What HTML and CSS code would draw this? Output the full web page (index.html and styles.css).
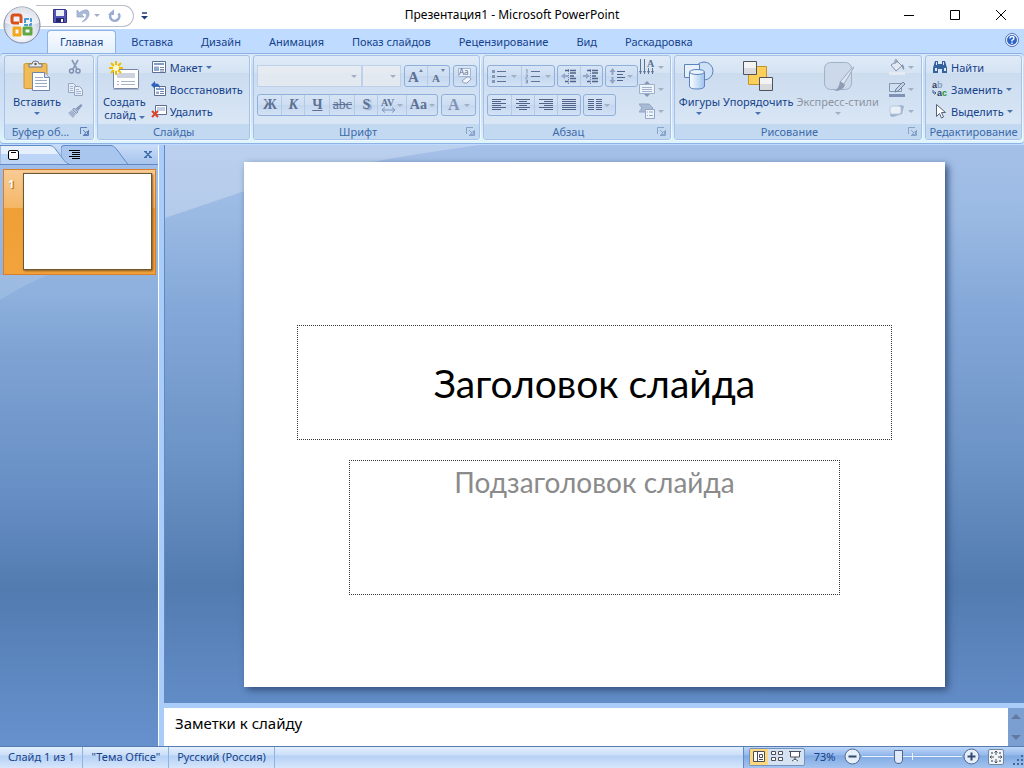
FILE: index.html
```html
<!DOCTYPE html>
<html lang="ru">
<head>
<meta charset="utf-8">
<meta name="viewport" content="width=device-width, initial-scale=1">
<title>Презентация1 - Microsoft PowerPoint</title>
<link rel="stylesheet" href="styles.css">
</head>
<body>

<header class="titlebar">
  <div class="quick">
    <button class="office" aria-label="Office">
      <svg width="40" height="40" viewBox="0 0 40 40">
        <defs>
          <radialGradient id="orb" cx="50%" cy="75%" r="75%">
            <stop offset="0" stop-color="#fff"/><stop offset=".55" stop-color="#dde3ee"/><stop offset="1" stop-color="#a9b3c6"/>
          </radialGradient>
        </defs>
        <circle cx="20" cy="20" r="18" fill="url(#orb)" stroke="#7d8aa3"/>
        <path d="M3 18a17 16 0 0 1 34 0q-17 5-34 0z" fill="#fff" opacity=".6"/>
        <g fill="none" stroke-linejoin="round">
          <path d="M17 18h-5q-2 0-2-2v-4q0-2 2-2h5q2 0 2 2v6" stroke="#d8501c" stroke-width="3"/>
          <path d="M23 14h6v6h-6z" stroke="#4a9ad4" stroke-width="2" stroke-dasharray="4 1"/>
          <path d="M12 23h6v7h-6z" stroke="#f2a81c" stroke-width="3"/>
          <path d="M22 23h7v6h-7z" stroke="#62a744" stroke-width="3"/>
        </g>
      </svg>
    </button>
    <div class="quick-bar">
      <button aria-label="Сохранить">
        <svg width="16" height="16" viewBox="0 0 16 16">
          <path d="M1.500 1.500h12l1 1v12h-13z" fill="#5456b8" stroke="#33348c"/>
          <path d="M4 2h8v6H4z" fill="#eef0fa"/><path d="M4 10h8v4H4z" fill="#23246a"/><path d="M9 11h2v3H9z" fill="#fff"/>
        </svg>
      </button>
      <button class="undo" aria-label="Отменить">
        <svg width="14" height="14" viewBox="0 0 14 14"><path d="M1 1v7h7L5.500 5.500Q10 2.500 10.500 6T6 13q7-3 7-8T9 1 3.500 3.500z" fill="#a9b9d6" stroke="#8fa2c6" stroke-width=".7"/></svg>
        <i class="arrow off"></i>
      </button>
      <button aria-label="Повторить">
        <svg width="14" height="14" viewBox="0 0 14 14"><path d="M10.500 4.500A4.600 4.600 0 1 1 4 3.500" fill="none" stroke="#9aadcf" stroke-width="2.600"/><path d="M6 0v6H0z" fill="#9aadcf"/></svg>
      </button>
    </div>
    <button class="quick-more" aria-label="Настройка панели быстрого доступа">
      <svg width="7" height="8" viewBox="0 0 7 8"><path d="M1 1h5" stroke="#1e3c78" stroke-width="1.500"/><path d="M0 4h7L3.500 7.500z" fill="#1e3c78"/></svg>
    </button>
  </div>
  <h1>Презентация1 - Microsoft PowerPoint</h1>
  <div class="window-buttons">
    <button aria-label="Свернуть"><svg width="10" height="10"><path d="M0 5.500h10" stroke="#000"/></svg></button>
    <button aria-label="Развернуть"><svg width="10" height="10"><path d="M.5.500h9v9h-9z" fill="none" stroke="#000"/></svg></button>
    <button aria-label="Закрыть"><svg width="10" height="10"><path d="M0 0l10 10M10 0L0 10" stroke="#000"/></svg></button>
  </div>
</header>

<nav class="tabs">
  <button class="active">Главная</button>
  <button>Вставка</button>
  <button>Дизайн</button>
  <button>Анимация</button>
  <button>Показ слайдов</button>
  <button>Рецензирование</button>
  <button>Вид</button>
  <button>Раскадровка</button>
  <button class="help" aria-label="Справка">
    <svg width="14" height="14" viewBox="0 0 14 14">
      <circle cx="7" cy="7" r="6.500" fill="#fff" stroke="#4a6eb0"/><circle cx="7" cy="7" r="5" fill="#2c63c8"/>
      <path d="M5 5.500q0-2 2-2t2 1.700Q9 6.300 7 7.300V8.500M7 9.500V11" fill="none" stroke="#fff" stroke-width="1.400"/>
    </svg>
  </button>
</nav>

<section class="ribbon">
  <div class="group clipboard">
    <div class="group-body">
      <button class="big">
        <svg width="30" height="32" viewBox="0 0 30 32">
          <rect x="2" y="3.500" width="23" height="25" rx="1.500" fill="#f0bc5a" stroke="#cf9534"/>
          <path d="M7 7V4h3q0-3 3.500-3T17 4h3v3z" fill="#e8eaee" stroke="#6d7482"/><circle cx="13.500" cy="4" r="1.200" fill="#555"/>
          <path d="M10.500 12.500h12l5 5v13h-17z" fill="#fff" stroke="#7286ab"/><path d="M22.500 12.500v5h5" fill="#d6e0f0" stroke="#7286ab"/>
          <path d="M13 17.500h8M13 20.500h12M13 23.500h12M13 26.500h12" stroke="#9aa9c4"/>
        </svg>
        <span>Вставить</span>
        <i class="arrow"></i>
      </button>
      <div class="stack">
        <button class="mini" aria-label="Вырезать"><svg width="16" height="16" viewBox="0 0 16 16"><path d="M5 1l5 9M11 1L6 10" stroke="#8b9bb8" stroke-width="1.700"/><circle cx="4.500" cy="12" r="2" fill="none" stroke="#7e8fb0" stroke-width="1.500"/><circle cx="11" cy="12" r="2" fill="none" stroke="#7e8fb0" stroke-width="1.500"/></svg></button>
        <button class="mini" aria-label="Копировать"><svg width="16" height="16" viewBox="0 0 16 16"><path d="M1.500 2.500h5l3 3v6h-8z" fill="#e6edf7" stroke="#93a6c6"/><path d="M3 5.500h3M3 7.500h3M3 9.500h3" stroke="#a9b8d2"/><path d="M7.500 5.500h5l3 3v6h-8z" fill="#e6edf7" stroke="#93a6c6"/><path d="M9 8.500h3M9 10.500h5M9 12.500h5" stroke="#a9b8d2"/></svg></button>
        <button class="mini" aria-label="Формат по образцу"><svg width="16" height="16" viewBox="0 0 16 16"><path d="M14 1l1.500 1.500L11 8 8.500 5.500z" fill="#8799ba"/><path d="M7 5l4 4-1.500 1.500-4-4z" fill="#b8c5dc" stroke="#8799ba"/><path d="M5 7l4 4-3 4L1 10z" fill="#a4b3ce"/></svg></button>
      </div>
    </div>
    <div class="group-title"><span>Буфер об...</span><button class="launcher" aria-label="Буфер обмена"><svg width="9" height="9" viewBox="0 0 9 9"><path d="M.5 7V.5H7M3 3l3 3M8.500 3v5.500H3M7.500 4v3.500H4z" fill="none" stroke="#5f7fb5"/></svg></button></div>
  </div>

  <div class="group slides">
    <div class="group-body">
      <button class="big">
        <svg width="32" height="32" viewBox="0 0 32 32">
          <rect x="5.500" y="9.500" width="25" height="19" rx="1" fill="#fff" stroke="#7688a8"/><path d="M5 29.500h26" stroke="#a9b6cc"/>
          <path d="M9 13h18v5H9z" fill="#cdd3de"/><path d="M9 21.500h2m2 0h14M9 24.500h2m2 0h14" stroke="#a7b3c8"/>
          <path d="M8 1v14M1 8h14M3 3l10 10M13 3L3 13" stroke="#f0bd00" stroke-width="2"/><circle cx="8" cy="8" r="3" fill="#fffbd0"/>
        </svg>
        <span>Создать<br>слайд <i class="arrow"></i></span>
      </button>
      <div class="stack">
        <button class="mini"><svg width="16" height="16" viewBox="0 0 16 16"><path d="M1.500 2.500h13v11h-13z" fill="#fff" stroke="#5b6f93"/><path d="M3 4h10v2H3z" fill="#7e9ccc"/><path d="M3 7.500h5v4.500H3z" fill="#8fa9d3"/><path d="M9 8.500h4M9 10.500h4M9 12h4" stroke="#7688a8"/></svg><span>Макет</span><i class="arrow"></i></button>
        <button class="mini"><svg width="16" height="16" viewBox="0 0 16 16"><path d="M3.500 5.500h11v9h-11z" fill="#fff" stroke="#5b6f93"/><path d="M5 7h8v2H5z" fill="#7e9ccc"/><path d="M5 10.500h3v2.500H5z" fill="#8fa9d3"/><path d="M9 10.500h4M9 12.500h4" stroke="#7688a8"/><path d="M0 4l4-4v2.500q5-.5 5 4.500Q7 4.500 4 5.500V8z" fill="#2f62bd"/></svg><span>Восстановить</span></button>
        <button class="mini"><svg width="16" height="16" viewBox="0 0 16 16"><path d="M4.500 2.500h11v9h-11z" fill="#fff" stroke="#5b6f93"/><path d="M6 4h8v4H6z" fill="#c3cfe2"/><path d="M1 8l6 6M7 8l-6 6" stroke="#e0402a" stroke-width="2"/></svg><span>Удалить</span></button>
      </div>
    </div>
    <div class="group-title"><span>Слайды</span></div>
  </div>

  <div class="group font">
    <div class="group-body rows">
      <div class="row">
        <div class="combos">
          <span class="combo family"><select aria-label="Шрифт" disabled><option></option></select><i class="arrow off"></i></span>
          <span class="combo size"><select aria-label="Размер шрифта" disabled><option></option></select><i class="arrow off"></i></span>
        </div>
        <div class="set">
          <button disabled aria-label="Увеличить размер"><svg width="16" height="16"><text x="0" y="14" class="glyph g15">A</text><path d="M11 4l2-3 2 3z" fill="#6c84ac"/></svg></button>
          <button disabled aria-label="Уменьшить размер"><svg width="16" height="16"><text x="1" y="14" class="glyph g11">A</text><path d="M10 1h4l-2 3z" fill="#6c84ac"/></svg></button>
        </div>
        <div class="set"><button disabled aria-label="Очистить формат"><svg width="18" height="18"><path d="M2.500 1.500h12v8h-12z" fill="#edf3fb" stroke="#a3b5d1"/><text x="3" y="8" class="tiny">Aa</text><path d="M6 14l5-4q3-1 4 2l-4 4q-4 1-5-2z" fill="#f2f5fa" stroke="#8d9ebc"/></svg></button></div>
      </div>
      <div class="row">
        <div class="set">
          <button disabled class="serif w23"><b>Ж</b></button>
          <button disabled class="serif w23"><b><em>К</em></b></button>
          <button disabled class="serif w25"><b><u>Ч</u></b></button>
          <button disabled class="serif w25"><s>abc</s></button>
          <button disabled class="serif w23 shadow"><b>S</b></button>
          <button disabled class="serif w29" aria-label="Интервал"><svg width="16" height="16"><text x="0" y="9" class="glyph g10">AV</text><path d="M1 13h13M4 10.500L1 13l3 2.500M11 10.500L14 13l-3 2.500" fill="none" stroke="#7c96c0"/></svg><i class="arrow off"></i></button>
          <button disabled class="serif w31"><b>Aa</b><i class="arrow off"></i></button>
        </div>
        <div class="set"><button disabled class="serif w33 color"><b>A</b><i class="arrow off"></i></button></div>
      </div>
    </div>
    <div class="group-title"><span>Шрифт</span><button class="launcher dim" aria-label="Шрифт"><svg width="9" height="9" viewBox="0 0 9 9"><path d="M.5 7V.5H7M3 3l3 3M8.500 3v5.500H3M7.500 4v3.500H4z" fill="none" stroke="#5f7fb5"/></svg></button></div>
  </div>

  <div class="group paragraph">
    <div class="group-body">
      <div class="rows">
        <div class="row">
          <div class="set">
            <button disabled class="w33" aria-label="Маркеры"><svg width="16" height="16"><path d="M1 3.500h3M1 8.500h3M1 13.500h3" stroke="#8496b5" stroke-width="3"/><path d="M6 3.500h9M6 8.500h9M6 13.500h9" stroke="#5f7396"/></svg><i class="arrow off"></i></button>
            <button disabled class="w33" aria-label="Нумерация"><svg width="16" height="16"><path d="M1 2l1-.5v4M.5 7h2v1.500l-2 1.500h2M.5 12h2v3h-2M1 13.500h1" fill="none" stroke="#8496b5"/><path d="M6 3.500h9M6 8.500h9M6 13.500h9" stroke="#5f7396"/></svg><i class="arrow off"></i></button>
          </div>
          <div class="set">
            <button disabled aria-label="Уменьшить отступ"><svg width="16" height="16"><path d="M4 2.500h4m1 0h6M9 5h6M9 8h4M9 10.500h6M4 13.500h4m1 0h6" stroke="#4f6488" stroke-width="1.500"/><path d="M7.500 1v15" stroke="#6c84ac" stroke-dasharray="1 1"/><path d="M0 8l4-3v2h3v2H4v2z" fill="#93a7c8"/></svg></button>
            <button disabled aria-label="Увеличить отступ"><svg width="16" height="16"><path d="M4 2.500h4m1 0h6M9 5h6M9 8h4M9 10.500h6M4 13.500h4m1 0h6" stroke="#4f6488" stroke-width="1.500"/><path d="M7.500 1v15" stroke="#6c84ac" stroke-dasharray="1 1"/><path d="M7 8L3 5v2H0v2h3v2z" fill="#93a7c8"/></svg></button>
          </div>
          <div class="set"><button disabled class="w31" aria-label="Междустрочный интервал"><svg width="16" height="16"><path d="M3.500 0l3 4h-2v3h-2V4h-2zM3.500 16l3-4h-2V9h-2v3h-2z" fill="#8fa3c4"/><path d="M8 3.500h8M8 6.500h6M8 9.500h8M8 12.500h6" stroke="#4f6488"/></svg><i class="arrow off"></i></button></div>
        </div>
        <div class="row">
          <div class="set">
            <button disabled class="w23" aria-label="По левому краю"><svg width="14" height="12"><path d="M0 .5h14M0 2.500h9M0 4.500h14M0 6.500h9M0 8.500h14M0 10.500h9" stroke="#4f6488"/></svg></button>
            <button disabled class="w23" aria-label="По центру"><svg width="14" height="12"><path d="M0 .5h14M3 2.500h8M0 4.500h14M3 6.500h8M0 8.500h14M3 10.500h8" stroke="#4f6488"/></svg></button>
            <button disabled class="w23" aria-label="По правому краю"><svg width="14" height="12"><path d="M0 .5h14M5 2.500h9M0 4.500h14M5 6.500h9M0 8.500h14M5 10.500h9" stroke="#4f6488"/></svg></button>
            <button disabled class="w23" aria-label="По ширине"><svg width="14" height="12"><path d="M0 .5h14M0 2.500h14M0 4.500h14M0 6.500h14M0 8.500h14M0 10.500h14" stroke="#4f6488"/></svg></button>
          </div>
          <div class="set"><button disabled class="w31" aria-label="Колонки"><svg width="14" height="12"><path d="M0 .5h6m2 0h6M0 2.500h6m2 0h6M0 4.500h6m2 0h6M0 6.500h6m2 0h6M0 8.500h6m2 0h6M0 10.500h6m2 0h6" stroke="#4f6488"/></svg><i class="arrow off"></i></button></div>
        </div>
      </div>
      <div class="stack">
        <button disabled class="mini" aria-label="Направление текста"><svg width="16" height="16"><path d="M1.500 0v15M5.500 0v15M9.500 9v6M13.500 9v6" stroke="#5f7396"/><path d="M0 12l1.500 3L3 12zM4 12l1.500 3L7 12zM8 12l1.500 3 1.500-3zM12 12l1.500 3 1.500-3z" fill="#5f7396"/><text x="8" y="8" class="glyph g10">A</text></svg><i class="arrow off"></i></button>
        <button disabled class="mini" aria-label="Выровнять текст"><svg width="16" height="16"><path d="M.5 3.500h15v9H.5z" fill="#edf3fa" stroke="#9fb0ca"/><path d="M3 6.500h10M3 8.500h10M3 10.500h10" stroke="#a2b2cb"/><path d="M8 0l3 3H5zM8 16l3-3H5z" fill="#8496b5"/></svg><i class="arrow off"></i></button>
        <button disabled class="mini" aria-label="Преобразовать в SmartArt"><svg width="16" height="16"><path d="M0 1h10l4 4-4 4H0l3-4z" fill="#a9bad4" stroke="#93a6c6"/><path d="M6.500 6.500h9v9h-9z" fill="#edf3fa" stroke="#93a6c6"/><path d="M8 9h1m1 0h4M8 12.500h1m1 0h4" stroke="#93a6c6"/></svg><i class="arrow off"></i></button>
      </div>
    </div>
    <div class="group-title"><span>Абзац</span><button class="launcher dim" aria-label="Абзац"><svg width="9" height="9" viewBox="0 0 9 9"><path d="M.5 7V.5H7M3 3l3 3M8.500 3v5.500H3M7.500 4v3.500H4z" fill="none" stroke="#5f7fb5"/></svg></button></div>
  </div>

  <div class="group drawing">
    <div class="group-body">
      <button class="big">
        <svg width="32" height="32" viewBox="0 0 32 32">
          <defs><linearGradient id="cyl"><stop offset="0" stop-color="#fff"/><stop offset="1" stop-color="#9cc3ee"/></linearGradient></defs>
          <circle cx="21" cy="11" r="9" fill="#cde0f6" stroke="#5b83bd"/><path d="M1.500 4.500h15v13h-15z" fill="#e8f1fb" stroke="#5b83bd"/>
          <path d="M6.500 12v14q0 3 7.500 3t7.500-3V12" fill="url(#cyl)" stroke="#5b83bd"/><ellipse cx="14" cy="12" rx="7.500" ry="2.500" fill="#e8f2fd" stroke="#5b83bd"/>
        </svg>
        <span>Фигуры</span>
        <i class="arrow"></i>
      </button>
      <button class="big">
        <svg width="32" height="32" viewBox="0 0 32 32">
          <path d="M6.500 6.500h18v18h-18z" fill="#fbd05a" stroke="#c7952c"/>
          <path d="M1.500 1.500h13v13h-13z" fill="#d9dadd" stroke="#50535a"/><path d="M2 2h12v6H2z" fill="#f3f3f4"/>
          <path d="M17.500 17.500h13v13h-13z" fill="#d9dadd" stroke="#50535a"/><path d="M18 18h12v6H18z" fill="#f3f3f4"/>
        </svg>
        <span>Упорядочить</span>
        <i class="arrow"></i>
      </button>
      <button class="big" disabled>
        <svg width="32" height="32" viewBox="0 0 32 32">
          <rect x="2.500" y="2.500" width="27" height="27" rx="6" fill="#cbd9eb" stroke="#a3b1c6"/>
          <path d="M32 7l-10 17-4-2L29 9z" fill="#dde5f0" stroke="#9dabc0"/><path d="M18 21l5 4q-2 6-11 6 5-2 6-10z" fill="#8f9db4"/>
        </svg>
        <span>Экспресс-стили</span>
        <i class="arrow"></i>
      </button>
      <div class="stack">
        <button disabled class="mini" aria-label="Заливка фигуры"><svg width="16" height="16"><path d="M2 6l6-4 5 5-6 5z" fill="#e3eaf4" stroke="#8594ae"/><path d="M6 5V1q1-1 2 0v3" fill="none" stroke="#8594ae"/><path d="M13 5q3 2 2 6-2-1-2-4z" fill="#8594ae"/><path d="M0 13h16v3H0z" fill="#e6ebf2"/></svg><i class="arrow off"></i></button>
        <button disabled class="mini" aria-label="Контур фигуры"><svg width="16" height="16"><path d="M.5 2.500h12v8H.5z" fill="none" stroke="#8594ae"/><path d="M14 1l2 2-7 7-3 1 1-3z" fill="#c7d3e5" stroke="#6f819f"/><path d="M0 13h16v3H0z" fill="#7f92b5"/></svg><i class="arrow off"></i></button>
        <button disabled class="mini" aria-label="Эффекты для фигур"><svg width="16" height="16"><path d="M3 4l9-2 3 1-2 8-9 3-3-1z" fill="#9fb1cd"/><rect x="1" y="3" width="11" height="8" rx="2" fill="#e9eff7" stroke="#bac8dc"/></svg><i class="arrow off"></i></button>
      </div>
    </div>
    <div class="group-title"><span>Рисование</span><button class="launcher dim" aria-label="Рисование"><svg width="9" height="9" viewBox="0 0 9 9"><path d="M.5 7V.5H7M3 3l3 3M8.500 3v5.500H3M7.500 4v3.500H4z" fill="none" stroke="#5f7fb5"/></svg></button></div>
  </div>

  <div class="group editing">
    <div class="group-body">
      <div class="stack">
        <button class="mini"><svg width="16" height="16"><path d="M3 2h3v3h4V2h3l2 7v5h-5v-4H6v4H1V9z" fill="#35619f"/><path d="M3 9h2v3H3zM12 9h2v3h-2zM4 3h1v3H4zM11 3h1v3h-1z" fill="#dce8f8"/></svg><span>Найти</span></button>
        <button class="mini"><svg width="16" height="16"><text x="0" y="7" class="ab">a<tspan fill="#8d9db8">b</tspan></text><text x="5" y="15" class="ab">a<tspan fill="#1c9a2c">c</tspan></text><path d="M1 9v3h3M2.500 10.500l1.500 1.500-1.500 1.500" fill="none" stroke="#35619f"/></svg><span>Заменить</span><i class="arrow"></i></button>
        <button class="mini"><svg width="16" height="16"><path d="M4.500 1.500v12l3-3 2 4.500 2-1-2-4.500h4z" fill="#fff" stroke="#55627a"/></svg><span>Выделить</span><i class="arrow"></i></button>
      </div>
    </div>
    <div class="group-title"><span>Редактирование</span></div>
  </div>
</section>

<main class="workspace">
  <aside class="outline">
    <div class="pane-tabs">
      <button class="pane-tab current" aria-label="Слайды">
        <svg class="shape" width="70" height="20" viewBox="0 0 70 20"><path d="M0 .5h50q3 0 5 3l9 12q3 4 6 4H0z" fill="#e6f0fd" stroke="#5f8ac6"/><path d="M1 9h57l8 10H1z" fill="#bcd5f7"/></svg>
        <svg width="11" height="10"><rect x=".5" y=".5" width="10" height="9" rx="1.500" fill="#fff" stroke="#000"/><path d="M3 2.500h5" stroke="#000"/></svg>
      </button>
      <button class="pane-tab" aria-label="Структура">
        <svg class="shape" width="70" height="20" viewBox="0 0 70 20"><path d="M0 12V3q0-2.500 3-2.500h47q3 0 5 3l12 16H6z" fill="#a9c6ee" stroke="#5f8ac6"/></svg>
        <svg width="11" height="10"><path d="M0 .5h11M3 2.500h8M3 4.500h8M0 6.500h11M3 8.500h8" stroke="#000"/></svg>
      </button>
      <button class="pane-close" aria-label="Закрыть"><svg width="8" height="7"><path d="M0 .5h3m2 0h3M1.500 1l5 5M6.500 1l-5 5M0 6.500h3m2 0h3" stroke="#3d6cae" stroke-width="1.300"/></svg></button>
    </div>
    <div class="thumb">
      <b>1</b>
      <div class="thumb-slide"></div>
    </div>
    <svg class="glint" width="60" height="30" viewBox="0 0 60 30"><path d="M0 0h48Q20 12 0 25z" fill="#fff" opacity=".13"/></svg>
  </aside>

  <section class="editor">
    <div class="canvas">
      <svg class="swoosh" viewBox="0 0 860 80" preserveAspectRatio="none"><path d="M0 0h315Q180 18 80 46L0 73z" fill="#fff" opacity=".25"/></svg>
      <div class="slide">
        <div class="placeholder heading"><h2>Заголовок слайда</h2></div>
        <div class="placeholder subheading"><p>Подзаголовок слайда</p></div>
      </div>
    </div>
    <div class="notes">
      <p>Заметки к слайду</p>
      <div class="scroll"><i class="up"></i><i class="down"></i></div>
    </div>
  </section>
</main>

<footer class="status">
  <span class="cell">Слайд 1 из 1</span>
  <span class="cell">"Тема Office"</span>
  <span class="cell">Русский (Россия)</span>
  <div class="zoom">
    <div class="views">
      <button class="on" aria-label="Обычный"><svg width="12" height="11"><path d="M.5.500h11v10H.5z" fill="#fff" stroke="#4a4f58"/><path d="M4.500 0v11" stroke="#4a4f58"/><path d="M6.500 3.500h3v3h-3zM6 8.500h4" fill="none" stroke="#4a4f58"/></svg></button>
      <button aria-label="Сортировщик слайдов"><svg width="12" height="11"><path d="M.5.500h4v3h-4zM7.500.500h4v3h-4zM.5 6.500h4v3h-4zM7.500 6.500h4v3h-4z" fill="#fff" stroke="#4a4f58"/></svg></button>
      <button aria-label="Показ слайдов"><svg width="12" height="11"><path d="M0 .5h12M1.500 1v5h9V1M6 6v3M3 10l3-2 3 2" fill="#fff" stroke="#4a4f58"/></svg></button>
    </div>
    <button class="percent">73%</button>
    <button aria-label="Уменьшить"><svg width="17" height="17"><circle cx="8.500" cy="8.500" r="7.500" fill="#e6eefa" stroke="#4f6690"/><path d="M4.500 8.500h8" stroke="#33496f" stroke-width="2"/></svg></button>
    <input type="range" min="0" max="100" value="35" aria-label="Масштаб">
    <button aria-label="Увеличить"><svg width="17" height="17"><circle cx="8.500" cy="8.500" r="7.500" fill="#e6eefa" stroke="#4f6690"/><path d="M4.500 8.500h8M8.500 4.500v8" stroke="#33496f" stroke-width="2"/></svg></button>
    <button class="fit" aria-label="Вписать слайд в окно"><svg width="16" height="16"><rect x=".5" y=".5" width="15" height="15" rx="1.500" fill="#f1f4f9" stroke="#75869f"/><path d="M8 6V2M6.500 3.500L8 2l1.500 1.500M8 10v4M6.500 12.500L8 14l1.500-1.500M6 8H2M3.500 6.500L2 8l1.500 1.500M10 8h4M12.500 6.500L14 8l-1.500 1.500" fill="none" stroke="#4a4f58"/><path d="M3 3h2v2H3zM11 3h2v2h-2zM3 11h2v2H3zM11 11h2v2h-2z" fill="#8a94a5"/></svg></button>
    <svg class="grip" width="11" height="12"><path d="M8 1h2v2H8zM4 5h2v2H4zM8 5h2v2H8zM0 9h2v2H0zM4 9h2v2H4zM8 9h2v2H8z" fill="#44699f"/></svg>
  </div>
</footer>

</body>
</html>
```
FILE: styles.css
```css
* {
  box-sizing: border-box;
}

body {
  margin: 0;
  min-height: 100vh;
  display: flex;
  flex-direction: column;
  font-family: "Noto Sans", "Open Sans", sans-serif;
  font-size: 11px;
  color: #15428b;
  background: #bfdbff;
}

button {
  display: flex;
  align-items: center;
  justify-content: center;
  padding: 0;
  border: none;
  background: none;
  font: inherit;
  color: inherit;
}

svg {
  display: block;
  flex: none;
}

h1, h2, p {
  margin: 0;
  font-weight: normal;
}

.arrow {
  display: inline-block;
  flex: none;
  border: 3px solid transparent;
  border-top-color: #4a72ad;
  border-bottom: none;
}

.arrow.off {
  border-top-color: #a3afc2;
}

/* Title bar */
.titlebar {
  display: grid;
  grid-template-columns: 1fr auto 1fr;
  align-items: center;
  height: 29px;
  background: #fff;
}

.titlebar h1 {
  font-size: 12px;
  color: #000;
}

.quick {
  position: relative;
  display: flex;
  align-items: center;
  padding: 2px 0 0 36px;
}

.office {
  position: absolute;
  left: 2px;
  top: 2px;
  z-index: 2;
}

.quick-bar {
  display: flex;
  align-items: center;
  gap: 8px;
  height: 22px;
  padding: 0 11px 0 16px;
  border: 1px solid #b9bec8;
  border-left: none;
  border-radius: 0 11px 11px 0;
}

.undo {
  gap: 4px;
}

.quick-more {
  margin-left: 7px;
}

.window-buttons {
  display: flex;
  justify-content: flex-end;
}

.window-buttons button {
  width: 46px;
  height: 29px;
}

/* Ribbon tabs */
.tabs {
  display: flex;
  align-items: flex-end;
  gap: 2px;
  height: 24px;
  padding: 0 4px 0 47px;
  background: #bfdbff;
}

.tabs button {
  height: 23px;
  padding: 0 12px 2px;
  border: 1px solid transparent;
  border-bottom: none;
}

.tabs .active {
  border-color: #8db2e3;
  border-radius: 4px 4px 0 0;
  background: linear-gradient(#f7fbff, #e3effd);
}

.tabs .help {
  margin-left: auto;
  padding: 0 0 4px;
}

/* Ribbon */
.ribbon {
  display: flex;
  gap: 3px;
  height: 91px;
  padding: 1px 2px 3px 4px;
  border: solid #8db2e3;
  border-width: 1px 0;
  border-radius: 4px;
  background: linear-gradient(#dbe8f8, #c8dbf2 20%, #d3e4f7 75%, #dff5fb);
}

.group {
  display: flex;
  flex-direction: column;
  border: 1px solid #a5c3e8;
  border-radius: 3px;
  background: linear-gradient(#dfeaf7, #d5e3f3 20%, #ccdcef 21%, #dce9f7);
  box-shadow: 1px 1px 0 #eef6ff;
  overflow: hidden;
}

.group-body {
  display: flex;
  flex: 1;
  gap: 3px;
  padding: 0 3px;
}

.group-title {
  display: flex;
  align-items: center;
  height: 15px;
  background: #c2d9f1;
  color: #3e6aaa;
}

.group-title span {
  flex: 1;
  text-align: center;
  white-space: nowrap;
}

.launcher {
  width: 17px;
}

.launcher.dim {
  opacity: 0.6;
}

.clipboard { flex: 89 0 0; }
.slides { flex: 153 0 0; }
.font { flex: 227 0 0; }
.paragraph { flex: 188 0 0; }
.drawing { flex: 249 0 0; }
.editing { flex: 96 0 0; }

.big {
  flex-direction: column;
  justify-content: flex-start;
  padding: 4px 0 0;
  line-height: 13px;
  white-space: nowrap;
}

.big span {
  margin-top: 3px;
}

.big > .arrow {
  margin-top: 4px;
}

.big:disabled {
  color: #8d949e;
}

.big:disabled .arrow {
  border-top-color: #a3afc2;
}

.clipboard .group-body {
  padding-left: 8px;
  gap: 6px;
}

.slides .group-body {
  padding-left: 5px;
  gap: 5px;
}

.stack {
  display: flex;
  flex-direction: column;
}

.mini {
  justify-content: flex-start;
  gap: 3px;
  height: 22px;
  white-space: nowrap;
}

.drawing .group-body {
  padding-left: 4px;
}

.drawing .stack {
  margin-left: auto;
  padding-right: 4px;
}

.editing .group-body {
  padding-left: 6px;
}

.rows {
  display: flex;
  flex-direction: column;
}

.group-body.rows,
.group-body .rows {
  gap: 7px;
}

.group-body.rows {
  padding-top: 9px;
}

.group-body .rows {
  padding-top: 9px;
}

.row {
  display: flex;
  gap: 3px;
}

.paragraph .row {
  gap: 2px;
}

.paragraph .group-body {
  gap: 1px;
}

.combos {
  display: flex;
}

.combo {
  position: relative;
  display: flex;
}

.combo select {
  width: 100%;
  height: 22px;
  border: 1px solid #b4cbe8;
  background: #edeff1;
  appearance: none;
}

.combo .arrow {
  position: absolute;
  right: 5px;
  top: 10px;
}

.family { width: 105px; }
.size { width: 39px; }

.set {
  display: flex;
  border: 1px solid #8fb0db;
  border-radius: 3px;
  background: linear-gradient(#d6e4f5, #cdddf2 50%, #c4d7ef 51%, #d3e2f5);
}

.set button {
  width: 22px;
  height: 20px;
  color: #5c7193;
}

.set button + button {
  border-left: 1px solid #b3cae8;
}

.set .w23 { width: 23px; }
.set .w25 { width: 25px; }
.set .w29 { width: 29px; }
.set .w31 { width: 31px; gap: 2px; }
.set .w33 { width: 33px; gap: 4px; }

.set .serif {
  font-family: "Liberation Serif", serif;
  font-size: 14px;
}

.shadow {
  text-shadow: 2px 1px 1px #8fa5c8;
}

.set .color {
  font-size: 16px;
  color: #8093b5;
}

.glyph {
  font-family: "Liberation Serif", serif;
  font-weight: bold;
  fill: #5c7193;
}

.g15 { font-size: 15px; }
.g11 { font-size: 11px; }
.g10 { font-size: 10px; }

.tiny {
  font-size: 8px;
  fill: #5c7193;
}

.ab {
  font-family: "Liberation Sans", sans-serif;
  font-size: 9px;
  font-weight: bold;
  fill: #2c3f63;
}

/* Workspace */
.workspace {
  flex: 1;
  display: flex;
  margin-top: 1px;
}

.outline {
  width: 159px;
  border-right: 1px solid #fff;
  background: linear-gradient(#a3c0e8, #8db0dd 25%, #7fa3d3 34%, #678fc5 58%, #527bb0 74%, #6691cd);
}

.pane-tabs {
  display: flex;
  align-items: center;
  height: 20px;
  background: linear-gradient(#c9ddf7, #a7c4ec);
  border-bottom: 1px solid #5f8ac6;
}

.pane-tab {
  position: relative;
  justify-content: flex-start;
  width: 61px;
  height: 20px;
  padding-left: 8px;
}

.pane-tab.current {
  z-index: 1;
}

.pane-tab svg {
  position: relative;
}

.pane-tab .shape {
  position: absolute;
  left: 0;
  top: 0;
}

.pane-close {
  margin-left: auto;
  padding-right: 6px;
}

.thumb {
  display: flex;
  gap: 7px;
  margin: 4px 2px 0 3px;
  padding: 3px 3px 4px 4px;
  border: 1px solid #d97f2c;
  background: linear-gradient(#f8cb94, #f5b767 36%, #eea037 37%, #f2a33b);
}

.thumb b {
  width: 8px;
  margin-top: 3px;
  color: #fff;
  text-shadow: 1px 1px 1px #8a5a1c;
}

.thumb-slide {
  flex: 1;
  aspect-ratio: 4 / 3;
  border: 1px solid #6b5836;
  background: #fff;
  box-shadow: 1px 1px 2px #8a5a1c;
}

.editor {
  flex: 1;
  display: flex;
  flex-direction: column;
  border-left: 5px solid #a9cdf8;
}

.canvas {
  position: relative;
  flex: 1;
  padding: 17px 0 16px;
  border-left: 1px solid #5f8ac6;
  background: linear-gradient(#a5c0e8, #9bbae3 12%, #83a7d8 30%, #6d94c6 55%, #527bb0 79%, #628cc6);
}

.swoosh {
  position: absolute;
  left: 0;
  top: 0;
  width: 100%;
  height: 80px;
}

.slide {
  position: relative;
  display: flex;
  flex-direction: column;
  align-items: center;
  gap: 20px;
  width: 81.5%;
  aspect-ratio: 4 / 3;
  margin: 0 auto;
  padding-top: 19%;
  background: #fff;
  box-shadow: 3px 3px 7px #35527d;
}

.placeholder {
  border: 1px dotted #333;
  font-family: Lato, "Noto Sans", sans-serif;
  text-align: center;
}

.heading {
  display: flex;
  align-items: center;
  justify-content: center;
  width: 85%;
  aspect-ratio: 596 / 115;
}

.heading h2 {
  font-size: 39px;
  color: #000;
}

.subheading {
  width: 70%;
  aspect-ratio: 491 / 135;
  padding-top: 4px;
}

.subheading p {
  font-size: 28px;
  color: #8b8b8b;
}

.notes {
  display: flex;
  height: 43px;
  border-top: 5px solid #a9cdf8;
  background: #fff;
}

.notes p {
  flex: 1;
  padding: 5px 11px;
  font-size: 15px;
  color: #000;
}

.scroll {
  display: flex;
  flex-direction: column;
  justify-content: space-between;
  align-items: center;
  width: 16px;
  padding: 6px 0;
  background: #7a9fd0;
}

.up,
.down {
  border: 5px solid transparent;
}

.up {
  border-top: none;
  border-bottom-color: #64799f;
}

.down {
  border-bottom: none;
  border-top-color: #64799f;
}

/* Status bar */
.status {
  display: flex;
  align-items: flex-start;
  height: 22px;
  border-top: 1px solid #567db0;
  background: linear-gradient(#e3effd, #cadef7 40%, #b4d0f5 41%, #d6e6fb);
}

.cell {
  height: 21px;
  padding: 0 8px;
  line-height: 19px;
  border-right: 1px solid #8db2e3;
}

.zoom {
  display: flex;
  align-items: center;
  height: 21px;
  margin-left: auto;
  padding: 0 0 2px 5px;
  border-left: 1px solid #5f8ac6;
  background: linear-gradient(#bdd6f8, #92b7ea 40%, #7fa9e2 41%, #a4c4f0);
}

.views {
  display: flex;
  border: 1px solid #7693bd;
  border-radius: 2px;
  background: #d5e2f3;
}

.views button {
  width: 18px;
  height: 16px;
}

.views .on {
  background: #fbd77e;
}

.percent {
  width: 39px;
}

.zoom input {
  width: 100px;
  height: 16px;
  margin: 0 1px;
  appearance: none;
  background:
    linear-gradient(#e9f2fd, #e9f2fd) 50px 50% / 1px 7px no-repeat,
    linear-gradient(#e9f2fd, #e9f2fd) 0 50% / 100% 1px no-repeat;
}

.zoom input::-webkit-slider-thumb {
  appearance: none;
  width: 9px;
  height: 14px;
  border: 1px solid #4f6690;
  border-radius: 1px 1px 5px 5px;
  background: #dfeafa;
}

.fit {
  margin-left: 8px;
}

.grip {
  margin: 6px 0 0 9px;
}
```
